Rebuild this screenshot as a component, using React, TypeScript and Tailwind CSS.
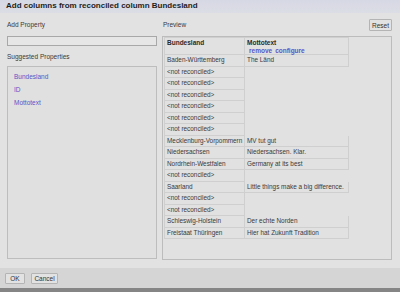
import React from "react";

interface Row {
  state: string;
  motto?: string;
}

const rows: Row[] = [
  { state: "Baden-Württemberg", motto: "The Länd" },
  { state: "<not reconciled>" },
  { state: "<not reconciled>" },
  { state: "<not reconciled>" },
  { state: "<not reconciled>" },
  { state: "<not reconciled>" },
  { state: "<not reconciled>" },
  { state: "Mecklenburg-Vorpommern", motto: "MV tut gut" },
  { state: "Niedersachsen", motto: "Niedersachsen. Klar." },
  { state: "Nordrhein-Westfalen", motto: "Germany at its best" },
  { state: "<not reconciled>" },
  { state: "Saarland", motto: "Little things make a big difference." },
  { state: "<not reconciled>" },
  { state: "<not reconciled>" },
  { state: "Schleswig-Holstein", motto: "Der echte Norden" },
  { state: "Freistaat Thüringen", motto: "Hier hat Zukunft Tradition" },
];

const suggestions = ["Bundesland", "ID", "Mottotext"];

const Btn = ({ label, w }: { label: string; w: string }) => (
  <button
    className={`${w} border border-[#b4b4b4] bg-[#e2e2e2] text-[6.5px] leading-[9px] text-[#333] rounded-[1px]`}
  >
    {label}
  </button>
);

export default function App() {
  return (
    <div className="w-[400px] h-[292px] flex flex-col bg-[#e2e2e2] text-[#3a3a3a] font-['Liberation_Sans',Arial,sans-serif] overflow-hidden">
      <div className="h-[13px] shrink-0 bg-gradient-to-b from-[#d6d8e4] to-[#dcdde5] pl-[6px] text-[8px] leading-[12px] font-bold text-[#1e1e1e]">
        Add columns from reconciled column Bundesland
      </div>

      <div className="flex-1 flex px-[7px] pt-[6px]">
        <div className="w-[150px] flex flex-col">
          <div className="h-[12px] text-[6.5px] leading-[12px]">Add Property</div>
          <div className="mt-[5px] h-[10px] border border-[#a8a8a8] bg-[#e6e6e6]" />
          <div className="mt-[5px] h-[12px] text-[6.5px] leading-[12px]">
            Suggested Properties
          </div>
          <div className="mt-[3px] h-[193px] border border-[#bdbdbd] bg-[#e0e0e0] pl-[6px] pt-[3px] flex flex-col">
            {suggestions.map((s) => (
              <div key={s} className="h-[13px] text-[6.5px] leading-[13px] text-[#5a55c8]">
                {s}
              </div>
            ))}
          </div>
        </div>

        <div className="ml-[5px] w-[230px] flex flex-col">
          <div className="h-[12px] flex items-center justify-between">
            <span className="pl-[1px] text-[6.5px]">Preview</span>
            <Btn label="Reset" w="w-[23px] h-[12px]" />
          </div>
          <div className="mt-[5px] h-[224px] border border-[#bcbcbc] bg-[#e1e1e1] pl-[1px]">
            <div className="flex">
              <div className="w-[81px] h-[18px] border border-[#cfcfcf] pl-[2px] pt-[1px] text-[6.5px] leading-[8px] font-bold text-[#2a2a2a]">
                Bundesland
              </div>
              <div className="w-[104px] h-[18px] border border-l-0 border-[#cfcfcf] pl-[2px] pt-[1px] text-[6.5px] leading-[7.5px]">
                <div className="font-bold text-[#2a2a2a]">Mottotext</div>
                <div className="pl-[2px] font-bold text-[#5a55c8] flex gap-[3px]">
                  <span>remove</span>
                  <span>configure</span>
                </div>
              </div>
            </div>
            {rows.map((r, i) => (
              <div key={i} className="flex h-[11.5px]">
                <div className="w-[81px] border border-t-0 border-[#cfcfcf] pl-[2px] text-[6.4px] leading-[10.5px] whitespace-nowrap">
                  {r.state}
                </div>
                {r.motto && (
                  <div className="w-[104px] border border-t-0 border-l-0 border-[#cfcfcf] pl-[2px] text-[6.4px] leading-[10.5px] whitespace-nowrap">
                    {r.motto}
                  </div>
                )}
              </div>
            ))}
          </div>
        </div>
      </div>

      <div className="h-[20px] shrink-0 bg-[#d5d5d5] flex items-center pl-[5px] gap-[6px]">
        <Btn label="OK" w="w-[20px] h-[11px]" />
        <Btn label="Cancel" w="w-[27px] h-[11px]" />
      </div>
      <div className="h-[4px] shrink-0 bg-[#858585]" />
    </div>
  );
}
